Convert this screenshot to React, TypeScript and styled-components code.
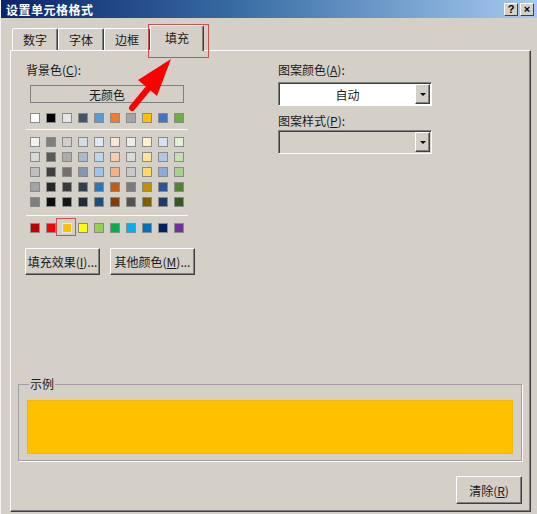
import styled, { createGlobalStyle } from 'styled-components';

const GlobalStyle = createGlobalStyle`
  html, body {
    margin: 0;
    padding: 0;
    background: #d4d0c8;
  }
  body {
    font-family: "Liberation Sans", "Noto Sans CJK SC", sans-serif;
    font-size: 12px;
    color: #1a1a1a;
  }
`;

const themeRow = ['#ffffff', '#000000', '#e7e6e6', '#44546a', '#5b9bd5', '#ed7d31', '#a5a5a5', '#ffc000', '#4472c4', '#70ad47'];

const tintRows = [
  ['#f2f2f2', '#7f7f7f', '#d0cece', '#d6dce4', '#deebf6', '#fbe5d5', '#ededed', '#fff2cc', '#d9e2f3', '#e2efd9'],
  ['#d8d8d8', '#595959', '#aeabab', '#adb9ca', '#bdd7ee', '#f7cbac', '#dbdbdb', '#fee599', '#b4c6e7', '#c5e0b3'],
  ['#bfbfbf', '#3f3f3f', '#757070', '#8496b0', '#9dc3e6', '#f4b183', '#c9c9c9', '#ffd965', '#8eaadb', '#a8d08d'],
  ['#a5a5a5', '#262626', '#3a3838', '#323f4f', '#2e75b5', '#c55a11', '#7b7b7b', '#bf9000', '#2f5496', '#538135'],
  ['#7f7f7f', '#0c0c0c', '#171616', '#222a35', '#1e4e79', '#833c0b', '#525252', '#7f6000', '#1f3864', '#375623'],
];

const standardRow = ['#c00000', '#ff0000', '#ffc000', '#ffff00', '#92d050', '#00b050', '#00b0f0', '#0070c0', '#002060', '#7030a0'];

const tabs = [
  { label: '数字', width: 46 },
  { label: '字体', width: 46 },
  { label: '边框', width: 46 },
  { label: '填充', width: 54, active: true },
];

export default function App() {
  return (
    <>
      <GlobalStyle />
      <Window>
        <TitleBar>
          <Title>设置单元格格式</Title>
          <CaptionButtons>
            <CaptionButton>?</CaptionButton>
            <CaptionButton>×</CaptionButton>
          </CaptionButtons>
        </TitleBar>

        <Body>
          <TabStrip>
            {tabs.map(t => (
              <Tab key={t.label} $width={t.width} $active={!!t.active}>
                {t.label}
                {t.active && <Highlight $l={-3} $t={-2} $r={-6} $b={-7} />}
              </Tab>
            ))}
          </TabStrip>

          <Panel>
            <TopArea>
              <LeftCol>
                <Label>背景色(<u>C</u>):</Label>
                <NoColorButton>无颜色</NoColorButton>
                <SwatchRow>
                  {themeRow.map((c, i) => <Swatch key={i} $color={c} />)}
                </SwatchRow>
                <Divider />
                <SwatchGrid>
                  {tintRows.map((row, r) => (
                    <SwatchRow key={r} $tight>
                      {row.map((c, i) => <Swatch key={i} $color={c} />)}
                    </SwatchRow>
                  ))}
                </SwatchGrid>
                <Divider $top={8} />
                <SwatchRow $top={7}>
                  {standardRow.map((c, i) => (
                    <Swatch key={i} $color={c} $selected={i === 2}>
                      {i === 2 && <Highlight $l={-7} $t={-6} $r={-5} $b={-4} />}
                    </Swatch>
                  ))}
                </SwatchRow>
                <ButtonRow>
                  <Button $width={75} $height={27}>填充效果(<u>I</u>)...</Button>
                  <Button $width={85} $height={27}>其他颜色(<u>M</u>)...</Button>
                </ButtonRow>
              </LeftCol>

              <RightCol>
                <Label>图案颜色(<u>A</u>):</Label>
                <Combo $white $top={5}>
                  <ComboText>自动</ComboText>
                  <DropButton><Arrow /></DropButton>
                </Combo>
                <Label $top={8}>图案样式(<u>P</u>):</Label>
                <Combo $top={2}>
                  <ComboText />
                  <DropButton><Arrow /></DropButton>
                </Combo>
              </RightCol>
            </TopArea>

            <SampleGroup>
              <Legend>示例</Legend>
              <SampleFill />
            </SampleGroup>

            <BottomRow>
              <Button $width={66} $height={28}>清除(<u>R</u>)</Button>
            </BottomRow>
          </Panel>
        </Body>

        <PointerArrow viewBox="0 0 537 514" width="537" height="514">
          <line x1="131" y1="108" x2="150" y2="85" stroke="#ff0000" strokeWidth="6" strokeLinecap="round" />
          <polygon points="170,59 137,80 156,96" fill="#ff0000" />
        </PointerArrow>
      </Window>
    </>
  );
}

const Window = styled.div`
  position: relative;
  width: 537px;
  height: 514px;
  box-sizing: border-box;
  display: flex;
  flex-direction: column;
  background: #d4d0c8;
  border-left: 1px solid #f4f4f4;
  overflow: hidden;
`;

const TitleBar = styled.div`
  height: 18px;
  flex-shrink: 0;
  display: flex;
  align-items: center;
  justify-content: space-between;
  padding: 0 3px 0 5px;
  background: linear-gradient(to right, #0a246a 0%, #3a6ea5 45%, #a6caf0 100%);
`;

const Title = styled.div`
  color: #fff;
  font-weight: bold;
  font-size: 12px;
  font-family: "Noto Sans CJK SC", sans-serif;
  letter-spacing: 0.5px;
`;

const CaptionButtons = styled.div`
  display: flex;
  gap: 2px;
`;

const CaptionButton = styled.div`
  width: 12px;
  height: 11px;
  box-sizing: content-box;
  background: #d4d0c8;
  border-top: 1px solid #fff;
  border-left: 1px solid #fff;
  border-right: 1px solid #404040;
  border-bottom: 1px solid #404040;
  display: flex;
  align-items: center;
  justify-content: center;
  font-weight: bold;
  font-size: 11px;
  line-height: 1;
  color: #000;
`;

const Body = styled.div`
  flex: 1;
  display: flex;
  flex-direction: column;
  padding: 7px 6px 2px 9px;
`;

const TabStrip = styled.div`
  height: 25px;
  display: flex;
  align-items: flex-end;
  padding-left: 2px;
  position: relative;
  z-index: 1;
`;

const Tab = styled.div<{ $width: number; $active: boolean }>`
  position: relative;
  width: ${p => p.$width}px;
  height: ${p => (p.$active ? 26 : 22)}px;
  margin-bottom: ${p => (p.$active ? -1 : 0)}px;
  box-sizing: border-box;
  display: flex;
  align-items: center;
  justify-content: center;
  padding-bottom: ${p => (p.$active ? 3 : 0)}px;
  background: #d4d0c8;
  border-top: 1px solid #fff;
  border-left: 1px solid #fff;
  border-right: 1px solid #404040;
  border-radius: 2px 2px 0 0;
  box-shadow: inset -1px 0 0 #808080;
  font-family: "Noto Sans CJK SC", sans-serif;
  font-size: 12px;
`;

const Highlight = styled.div<{ $l: number; $t: number; $r: number; $b: number }>`
  position: absolute;
  left: ${p => p.$l}px;
  top: ${p => p.$t}px;
  right: ${p => p.$r}px;
  bottom: ${p => p.$b}px;
  border: 1px solid #d0504f;
  pointer-events: none;
`;

const Panel = styled.div`
  flex: 1;
  display: flex;
  flex-direction: column;
  border-top: 1px solid #fff;
  border-left: 1px solid #fff;
  border-right: 1px solid #404040;
  border-bottom: 1px solid #404040;
  box-shadow: inset -1px -1px 0 #808080;
`;

const TopArea = styled.div`
  display: flex;
  padding-top: 12px;
`;

const LeftCol = styled.div`
  width: 252px;
  padding-left: 15px;
  display: flex;
  flex-direction: column;
`;

const RightCol = styled.div`
  width: 154px;
  display: flex;
  flex-direction: column;
`;

const Label = styled.div<{ $top?: number }>`
  margin-top: ${p => p.$top ?? 0}px;
  height: 14px;
  line-height: 14px;
  font-family: "Noto Sans CJK SC", sans-serif;
  font-size: 12px;
  white-space: nowrap;
`;

const NoColorButton = styled.div`
  margin: 8px 0 0 4px;
  width: 154px;
  height: 18px;
  box-sizing: border-box;
  border: 1px solid #808080;
  display: flex;
  align-items: center;
  justify-content: center;
  font-family: "Noto Sans CJK SC", sans-serif;
  font-size: 12px;
`;

const SwatchRow = styled.div<{ $top?: number; $tight?: boolean }>`
  display: flex;
  gap: 6px;
  padding-left: 4px;
  margin-top: ${p => (p.$tight ? 0 : p.$top ?? 10)}px;
`;

const SwatchGrid = styled.div`
  display: flex;
  flex-direction: column;
  gap: 5px;
  margin-top: 7px;
`;

const Swatch = styled.div<{ $color: string; $selected?: boolean }>`
  position: relative;
  width: 10px;
  height: 10px;
  box-sizing: border-box;
  background: ${p => p.$color};
  border: 1px solid ${p => (p.$selected ? '#e8e8e8' : '#8a8a8a')};
`;

const Divider = styled.div<{ $top?: number }>`
  margin-top: ${p => p.$top ?? 6}px;
  width: 162px;
  height: 1px;
  background: #f8f8f8;
`;

const ButtonRow = styled.div`
  display: flex;
  gap: 10px;
  margin: 15px 0 0 -1px;
`;

const Button = styled.div<{ $width: number; $height: number }>`
  width: ${p => p.$width}px;
  height: ${p => p.$height}px;
  box-sizing: border-box;
  display: flex;
  align-items: center;
  justify-content: center;
  background: #d4d0c8;
  border-top: 1px solid #fff;
  border-left: 1px solid #fff;
  border-right: 1px solid #404040;
  border-bottom: 1px solid #404040;
  box-shadow: inset -1px -1px 0 #808080;
  font-family: "Noto Sans CJK SC", sans-serif;
  font-size: 12px;
  white-space: nowrap;
`;

const Combo = styled.div<{ $white?: boolean; $top?: number }>`
  margin-top: ${p => p.$top ?? 0}px;
  height: 24px;
  box-sizing: border-box;
  display: flex;
  background: ${p => (p.$white ? '#fff' : '#d4d0c8')};
  border-top: 1px solid #808080;
  border-left: 1px solid #808080;
  border-right: 1px solid #fff;
  border-bottom: 1px solid #fff;
  box-shadow: inset 1px 1px 0 #404040;
  padding: 1px 1px 1px 1px;
`;

const ComboText = styled.div`
  flex: 1;
  display: flex;
  align-items: center;
  justify-content: center;
  font-family: "Noto Sans CJK SC", sans-serif;
  font-size: 12px;
`;

const DropButton = styled.div`
  width: 15px;
  box-sizing: border-box;
  display: flex;
  align-items: center;
  justify-content: center;
  background: #d4d0c8;
  border-top: 1px solid #fff;
  border-left: 1px solid #fff;
  border-right: 1px solid #404040;
  border-bottom: 1px solid #404040;
  box-shadow: inset -1px -1px 0 #808080;
`;

const Arrow = styled.div`
  width: 0;
  height: 0;
  border-left: 3px solid transparent;
  border-right: 3px solid transparent;
  border-top: 3px solid #000;
`;

const SampleGroup = styled.fieldset`
  margin: auto 8px 0 7px;
  padding: 9px 8px 6px 8px;
  border: 1px solid #a0a0a0;
  box-shadow: 1px 1px 0 #fff;
  min-width: 0;
`;

const Legend = styled.legend`
  padding: 0 1px;
  margin-left: 2px;
  font-family: "Noto Sans CJK SC", sans-serif;
  font-size: 12px;
  line-height: 14px;
`;

const SampleFill = styled.div`
  height: 54px;
  background: #ffc000;
  box-shadow: inset 0 0 0 1px #f5b800;
`;

const BottomRow = styled.div`
  display: flex;
  justify-content: flex-end;
  margin: 15px 8px 7px 0;
`;

const PointerArrow = styled.svg`
  position: absolute;
  left: 0;
  top: 0;
  pointer-events: none;
`;
